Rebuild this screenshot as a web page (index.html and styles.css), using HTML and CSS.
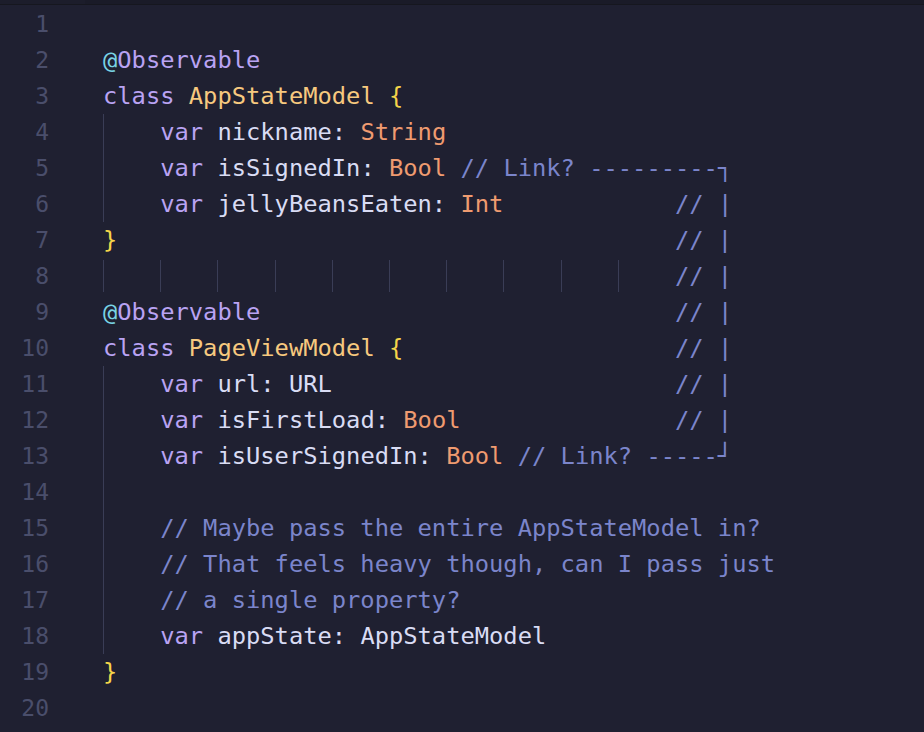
FILE: index.html
```html
<!DOCTYPE html>
<html>
<head>
<meta charset="utf-8">
<link rel="stylesheet" href="styles.css">
</head>
<body>
<div class="topbar"><div class="tb-gutter"></div><div class="tb-main"></div></div>
<div class="editor">
  <div class="line"><span class="ln">1</span><span class="code"></span></div>
  <div class="line"><span class="ln">2</span><span class="code"><span class="at">@</span><span class="kw">Observable</span></span></div>
  <div class="line"><span class="ln">3</span><span class="code"><span class="kw">class</span> <span class="cls">AppStateModel</span> <span class="br">{</span></span></div>
  <div class="line"><span class="ln">4</span><span class="code"><span class="ind"></span><span class="kw">var</span> nickname: <span class="ty">String</span></span></div>
  <div class="line"><span class="ln">5</span><span class="code"><span class="ind"></span><span class="kw">var</span> isSignedIn: <span class="ty">Bool</span> <span class="cm">// Link? ---------┐</span></span></div>
  <div class="line"><span class="ln">6</span><span class="code"><span class="ind"></span><span class="kw">var</span> jellyBeansEaten: <span class="ty">Int</span>            <span class="cm">// |</span></span></div>
  <div class="line"><span class="ln">7</span><span class="code"><span class="br">}</span>                                       <span class="cm">// |</span></span></div>
  <div class="line"><span class="ln">8</span><span class="code"><span class="ind short"></span><span class="ind short"></span><span class="ind short"></span><span class="ind short"></span><span class="ind short"></span><span class="ind short"></span><span class="ind short"></span><span class="ind short"></span><span class="ind short"></span><span class="ind short"></span><span class="cm">// |</span></span></div>
  <div class="line"><span class="ln">9</span><span class="code"><span class="at">@</span><span class="kw">Observable</span>                             <span class="cm">// |</span></span></div>
  <div class="line"><span class="ln">10</span><span class="code"><span class="kw">class</span> <span class="cls">PageViewModel</span> <span class="br">{</span>                   <span class="cm">// |</span></span></div>
  <div class="line"><span class="ln">11</span><span class="code"><span class="ind"></span><span class="kw">var</span> url: URL                        <span class="cm">// |</span></span></div>
  <div class="line"><span class="ln">12</span><span class="code"><span class="ind"></span><span class="kw">var</span> isFirstLoad: <span class="ty">Bool</span>               <span class="cm">// |</span></span></div>
  <div class="line"><span class="ln">13</span><span class="code"><span class="ind"></span><span class="kw">var</span> isUserSignedIn: <span class="ty">Bool</span> <span class="cm">// Link? -----┘</span></span></div>
  <div class="line"><span class="ln">14</span><span class="code"><span class="ind"></span></span></div>
  <div class="line"><span class="ln">15</span><span class="code"><span class="ind"></span><span class="cm">// Maybe pass the entire AppStateModel in?</span></span></div>
  <div class="line"><span class="ln">16</span><span class="code"><span class="ind"></span><span class="cm">// That feels heavy though, can I pass just</span></span></div>
  <div class="line"><span class="ln">17</span><span class="code"><span class="ind"></span><span class="cm">// a single property?</span></span></div>
  <div class="line"><span class="ln">18</span><span class="code"><span class="ind"></span><span class="kw">var</span> appState: AppStateModel</span></div>
  <div class="line"><span class="ln">19</span><span class="code"><span class="br">}</span></span></div>
  <div class="line"><span class="ln">20</span><span class="code"></span></div>
</div>
</body>
</html>
```
FILE: styles.css
```css
html, body {
  margin: 0;
  padding: 0;
  background: #1f2031;
  width: 924px;
  height: 732px;
  overflow: hidden;
}
.topbar {
  display: flex;
  height: 4px;
  border-bottom: 1px solid #16171f;
}
.tb-gutter {
  width: 85px;
  background: #1c1d2b;
}
.tb-main {
  flex: 1;
  background: #1a1b28;
}
.editor {
  padding-top: 1px;
  font-family: "DejaVu Sans Mono", monospace;
  font-size: 23.75px;
}
.line {
  display: flex;
  height: 36px;
  line-height: 36px;
  white-space: pre;
  color: #d9dcf4;
}
.ln {
  width: 49px;
  flex: none;
  text-align: right;
  color: #4a4e6b;
  font-size: 23px;
}
.code {
  display: block;
  margin-left: 54px;
}
.ind {
  display: inline-block;
  vertical-align: top;
  box-sizing: border-box;
  width: 4ch;
  height: 36px;
  border-left: 1px solid #3a3d56;
}
.ind.short {
  height: 32px;
  margin-top: 2px;
}
.kw { color: #b9a3f3; }
.at { color: #79d3e4; }
.cls { color: #f7c97f; }
.ty { color: #ef9b70; }
.br { color: #f4d54a; }
.cm { color: #7b85cb; }
```
